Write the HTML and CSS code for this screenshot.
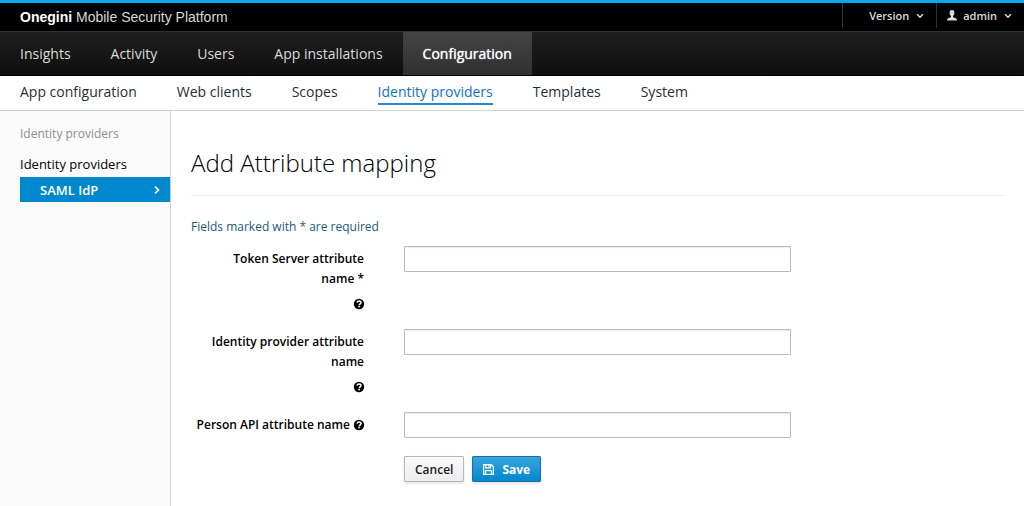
FILE: index.html
```html
<!DOCTYPE html>
<html lang="en">
<head>
<meta charset="utf-8">
<title>Onegini Mobile Security Platform</title>
<link rel="stylesheet" href="styles.css">
</head>
<body>
<svg class="symbols" aria-hidden="true">
  <symbol id="chevron" viewBox="0 0 8 6"><path d="M1 1.2 4 4.2 7 1.2" fill="none" stroke="currentColor" stroke-width="1.5"/></symbol>
  <symbol id="help" viewBox="0 0 12 12">
    <circle cx="6" cy="6" r="5.200" fill="currentColor"/>
    <path d="M4 4.6C4.3 3.4 5 3 6 3c1.200 0 2 .6 2 1.600C8 5.800 6.200 5.800 6.200 7.200" fill="none" stroke="#fff" stroke-width="1.500"/>
    <rect x="5.300" y="7.900" width="1.600" height="1.400" fill="#fff"/>
  </symbol>
</svg>
<header>
  <div class="topbar">
    <a class="brand" href="#"><b>Onegini</b> Mobile Security Platform</a>
    <div class="utility">
      <button class="utility-item version" type="button">Version <svg class="chevron"><use href="#chevron"/></svg></button>
      <button class="utility-item user" type="button">
        <svg class="person" viewBox="0 0 10 11"><path d="M5 0C3.300 0 2.500 1.200 2.600 2.900c.1 1.400.6 2.200 1.300 2.900v1.300C3.600 7.900.6 8.100.2 9.200L0 10.500h10l-.2-1.300c-.4-1.100-3.400-1.300-3.700-2.100V5.800c.7-.7 1.200-1.500 1.300-2.900C7.500 1.200 6.700 0 5 0z" fill="currentColor"/></svg>
        admin <svg class="chevron"><use href="#chevron"/></svg>
      </button>
    </div>
  </div>
  <nav class="mainnav" aria-label="Main">
    <a href="#">Insights</a>
    <a href="#">Activity</a>
    <a href="#">Users</a>
    <a href="#">App installations</a>
    <a class="active" href="#">Configuration</a>
  </nav>
  <nav class="subnav" aria-label="Configuration">
    <a href="#">App configuration</a>
    <a href="#">Web clients</a>
    <a href="#">Scopes</a>
    <a class="active" href="#">Identity providers</a>
    <a href="#">Templates</a>
    <a href="#">System</a>
  </nav>
</header>
<div class="page">
  <aside class="sidebar">
    <div class="sidebar-title">Identity providers</div>
    <a class="sidebar-link" href="#">Identity providers</a>
    <a class="sidebar-current" href="#">SAML IdP <svg class="arrow" viewBox="0 0 6 8"><path d="M1 .7 4.500 4 1 7.300" fill="none" stroke="currentColor" stroke-width="1.600"/></svg></a>
  </aside>
  <main>
    <h1>Add Attribute mapping</h1>
    <p class="hint">Fields marked with * are required</p>
    <form>
      <div class="field">
        <div class="label"><label for="token">Token Server attribute name&nbsp;*</label><div class="help-row"><svg class="help"><use href="#help"/></svg></div></div>
        <input id="token" type="text">
      </div>
      <div class="field">
        <div class="label"><label for="idp">Identity provider attribute name</label><div class="help-row"><svg class="help"><use href="#help"/></svg></div></div>
        <input id="idp" type="text">
      </div>
      <div class="field">
        <div class="label"><label for="person">Person API attribute name</label> <svg class="help"><use href="#help"/></svg></div>
        <input id="person" type="text">
      </div>
      <div class="field">
        <div class="actions">
          <button class="btn" type="button">Cancel</button>
          <button class="btn primary" type="submit">
            <svg class="disk" viewBox="0 0 11 11"><path d="M.6.600h7.700l2.100 2.200v7.600H.6zM2.800.5v3.300h4.700V.5M2.500 10.500V6.700h6v3.800" fill="none" stroke="currentColor" stroke-width="1.200"/><path d="M5.300.8h1.200v2H5.300z" fill="currentColor"/></svg>Save
          </button>
        </div>
      </div>
    </form>
  </main>
</div>
</body>
</html>
```
FILE: styles.css
```css
* { box-sizing: border-box; }
body {
  margin: 0;
  min-height: 100vh;
  display: flex;
  flex-direction: column;
  font: 12px/20px "Open Sans", sans-serif;
  color: #000;
  background: #fff;
}
a { color: inherit; text-decoration: none; }
button { font-family: inherit; }
.symbols { display: none; }

.topbar {
  display: flex;
  justify-content: space-between;
  align-items: flex-start;
  height: 31px;
  padding-left: 20px;
  border-top: 3px solid #00a8f0;
  background: #000;
}
.brand {
  color: #d8d8d8;
  font: 14px/28px "Liberation Sans", sans-serif;
}
.brand b { color: #fff; }
.utility { display: flex; }
.utility-item {
  display: flex;
  align-items: center;
  height: 25px;
  padding: 0 12px 0 10px;
  border: 0;
  border-left: 1px solid #333;
  background: none;
  color: #dbdbdb;
  font-size: 11px;
  font-weight: 600;
}
.version { padding-left: 26px; }
.chevron { width: 8px; height: 6px; margin-left: 7px; }
.person { width: 10px; height: 11px; margin-right: 6px; }

.mainnav {
  display: flex;
  height: 45px;
  border-top: 1px solid #303030;
  border-bottom: 1px solid #000;
  background: linear-gradient(#1e1e1e, #0f0f0f);
  color: #dbdbdb;
  font-size: 14px;
  font-weight: 500;
  line-height: 43px;
}
.mainnav a { padding: 0 20px; }
.mainnav .active {
  background: linear-gradient(#444, #303030);
  color: #fff;
  text-shadow: 0 0 1px #fff;
}

.subnav {
  display: flex;
  gap: 40px;
  height: 35px;
  padding: 5px 20px 0;
  border-bottom: 1px solid #d1d1d1;
  color: #292e34;
  font-size: 14px;
  line-height: 22px;
}
.subnav a { height: 24px; }
.subnav .active {
  color: #1272c4;
  border-bottom: 2px solid #2b86cc;
}

.page { display: flex; flex: 1; }
.sidebar {
  flex: none;
  width: 171px;
  padding: 12px 0 0 20px;
  border-right: 1px solid #d1d1d1;
  background: #fafafa;
  font-size: 13px;
}
.sidebar-title { margin-bottom: 10px; font-size: 12px; line-height: 21px; color: #8f8f8f; }
.sidebar-link { display: block; line-height: 21px; padding-bottom: 2px; }
.sidebar-current {
  display: flex;
  align-items: center;
  justify-content: space-between;
  height: 25px;
  padding: 0 10px 0 20px;
  background: #0088ce;
  color: #fff;
  font-weight: 600;
}
.arrow { width: 6px; height: 8px; }

main { flex: 1; padding: 36px 20px 20px; }
h1 {
  margin: 0 0 21px;
  padding-bottom: 16px;
  border-bottom: 1px solid #eee;
  font-size: 24px;
  font-weight: 300;
  line-height: 32px;
}
.hint { margin: 0 0 9px; color: #1f5878; }

.field {
  display: grid;
  grid-template-columns: 173fr 387fr 173fr;
  column-gap: 40px;
  margin-bottom: 18px;
}
.label { padding-top: 3px; text-align: right; font-weight: 600; }
.help-row { margin-top: 8px; line-height: 14px; }
.help { width: 12px; height: 12px; vertical-align: -2px; margin-right: -1px; }
input {
  width: 100%;
  height: 26px;
  padding: 2px 6px;
  border: 1px solid #bbb;
  border-radius: 1px;
  box-shadow: inset 0 1px 1px rgba(0, 0, 0, .075);
  font: inherit;
}
.actions { grid-column: 2; display: flex; gap: 8px; }
.btn {
  display: flex;
  align-items: center;
  height: 26px;
  padding: 0 10px;
  border: 1px solid #b7b7b7;
  border-radius: 1px;
  background: linear-gradient(#fafafa, #ededed);
  box-shadow: 0 2px 3px rgba(0, 0, 0, .1);
  color: #222;
  font-size: 12px;
  font-weight: 600;
}
.primary {
  border-color: #1a70a8;
  background: linear-gradient(#39a5dc, #0088ce);
  color: #fff;
  font-weight: 700;
}
.disk { width: 11px; height: 11px; margin-right: 8px; }
```
